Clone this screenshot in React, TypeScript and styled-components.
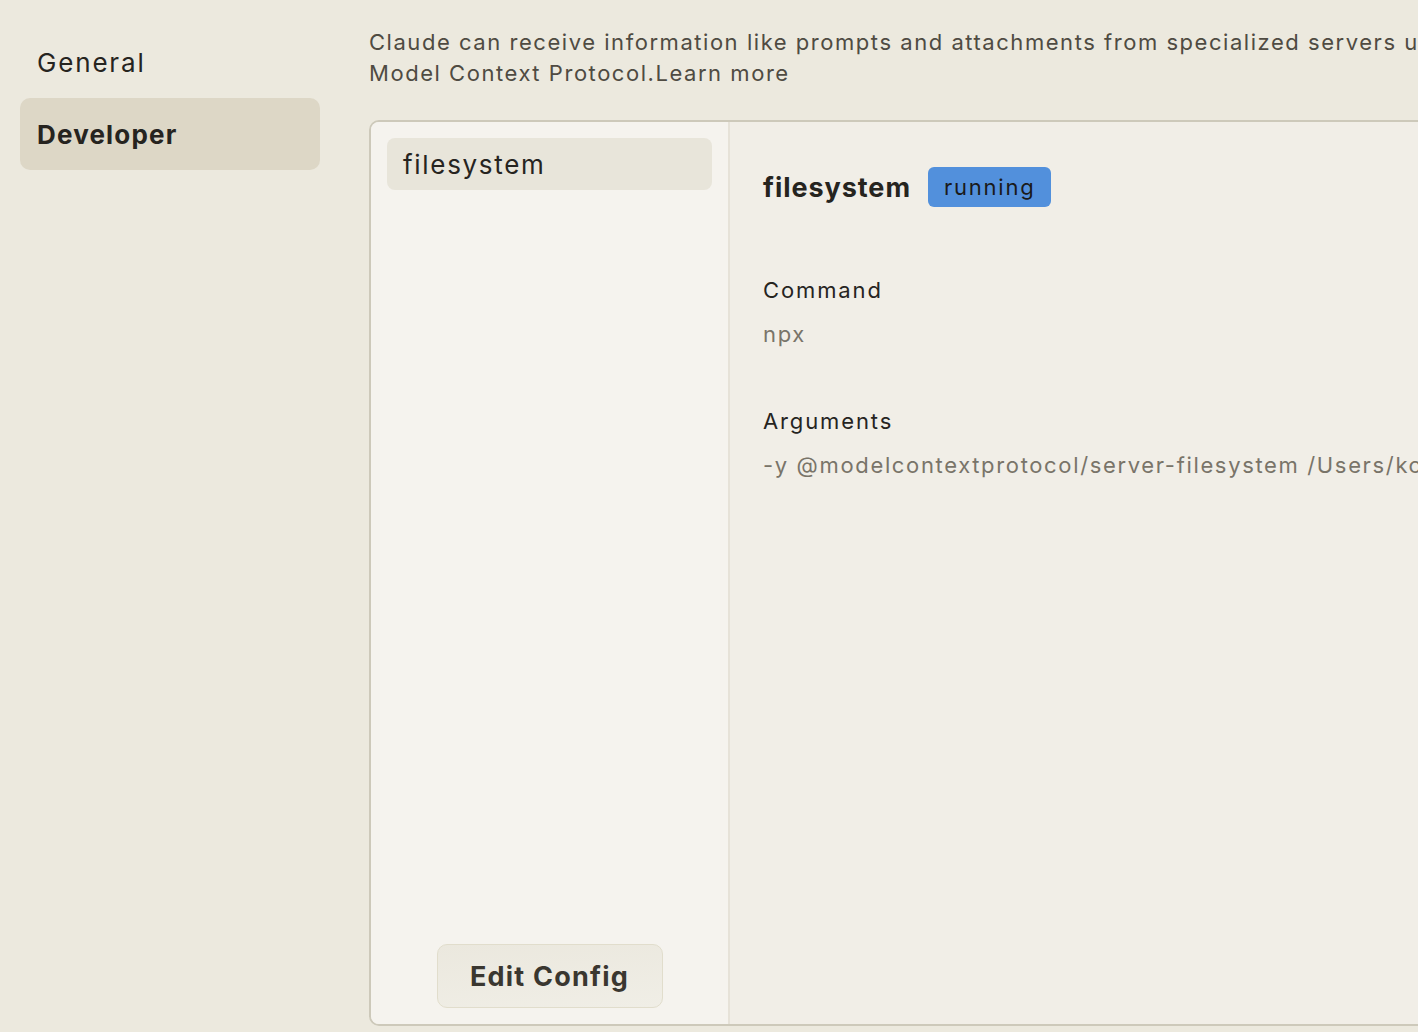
import React from "react";
import styled, { createGlobalStyle } from "styled-components";

const GlobalStyle = createGlobalStyle`
  html, body {
    margin: 0;
    padding: 0;
    background: #ece9de;
    overflow: hidden;
  }
  body {
    font-family: Inter, "Noto Sans", sans-serif;
    color: #26241f;
  }
`;

const Page = styled.div`
  display: flex;
  width: 1418px;
  height: 1032px;
  overflow: hidden;
`;

const Sidebar = styled.nav`
  flex: 0 0 300px;
  padding: 26px 0 0 20px;
  display: flex;
  flex-direction: column;
`;

const NavItem = styled.div<{ $active?: boolean }>`
  height: 72px;
  display: flex;
  align-items: center;
  padding-left: 17px;
  border-radius: 10px;
  font-size: 26px;
  letter-spacing: ${(p) => (p.$active ? "0.045em" : "0.07em")};
  font-weight: ${(p) => (p.$active ? 700 : 400)};
  background: ${(p) => (p.$active ? "#ddd7c6" : "transparent")};
  color: #26241f;
`;

const Main = styled.main`
  flex: 0 0 auto;
  margin-left: 49px;
  padding-top: 27px;
  width: 1200px;
  display: flex;
  flex-direction: column;
`;

const Intro = styled.p`
  margin: 0 0 31px;
  font-size: 22px;
  line-height: 31px;
  letter-spacing: 0.07em;
  color: #4f4b42;
  white-space: nowrap;
`;

const Panel = styled.section`
  display: flex;
  height: 902px;
  border: 2px solid #cdc9ba;
  border-radius: 10px;
  overflow: hidden;
  background: #f1eee7;
`;

const ServerList = styled.div`
  flex: 0 0 359px;
  background: #f5f3ee;
  border-right: 2px solid #e6e2d8;
  padding: 16px 16px 16px;
  box-sizing: border-box;
  display: flex;
  flex-direction: column;
`;

const ServerItem = styled.div`
  height: 52px;
  display: flex;
  align-items: center;
  padding-left: 16px;
  border-radius: 8px;
  background: #e8e5da;
  font-size: 26px;
  letter-spacing: 0.065em;
  color: #26241f;
`;

const EditButton = styled.button`
  margin: auto auto 0;
  width: 226px;
  height: 64px;
  border-radius: 10px;
  border: 1px solid #e1ddcc;
  background: linear-gradient(175deg, #ebe8de 0%, #f0eee6 100%);
  font-family: inherit;
  font-size: 27px;
  font-weight: 700;
  letter-spacing: 0.045em;
  color: #3a3730;
`;

const Detail = styled.div`
  flex: 1;
  padding: 45px 33px;
`;

const Header = styled.div`
  display: flex;
  align-items: center;
  gap: 17px;
  margin-bottom: 70px;
`;

const Name = styled.h2`
  margin: 0;
  font-size: 27px;
  font-weight: 700;
  letter-spacing: 0.035em;
  color: #26241f;
`;

const Badge = styled.span`
  display: inline-flex;
  align-items: center;
  height: 40px;
  padding: 0 16px;
  border-radius: 6px;
  background: #5290dc;
  font-size: 22px;
  letter-spacing: 0.08em;
  color: #1a1a1a;
`;

const Field = styled.div`
  margin-bottom: 61px;
`;

const Label = styled.div`
  font-size: 22px;
  letter-spacing: 0.085em;
  color: #26241f;
  margin-bottom: 18px;
`;

const Value = styled.div`
  font-size: 22px;
  letter-spacing: 0.075em;
  color: #797469;
  white-space: nowrap;
`;

export default function App() {
  return (
    <>
      <GlobalStyle />
      <Page>
        <Sidebar>
          <NavItem>General</NavItem>
          <NavItem $active>Developer</NavItem>
        </Sidebar>
        <Main>
          <Intro>
            Claude can receive information like prompts and attachments from specialized servers using
            <br />
            Model Context Protocol.Learn more
          </Intro>
          <Panel>
            <ServerList>
              <ServerItem>filesystem</ServerItem>
              <EditButton>Edit Config</EditButton>
            </ServerList>
            <Detail>
              <Header>
                <Name>filesystem</Name>
                <Badge>running</Badge>
              </Header>
              <Field>
                <Label>Command</Label>
                <Value>npx</Value>
              </Field>
              <Field>
                <Label>Arguments</Label>
                <Value>-y @modelcontextprotocol/server-filesystem /Users/kc/Desktop</Value>
              </Field>
            </Detail>
          </Panel>
        </Main>
      </Page>
    </>
  );
}
